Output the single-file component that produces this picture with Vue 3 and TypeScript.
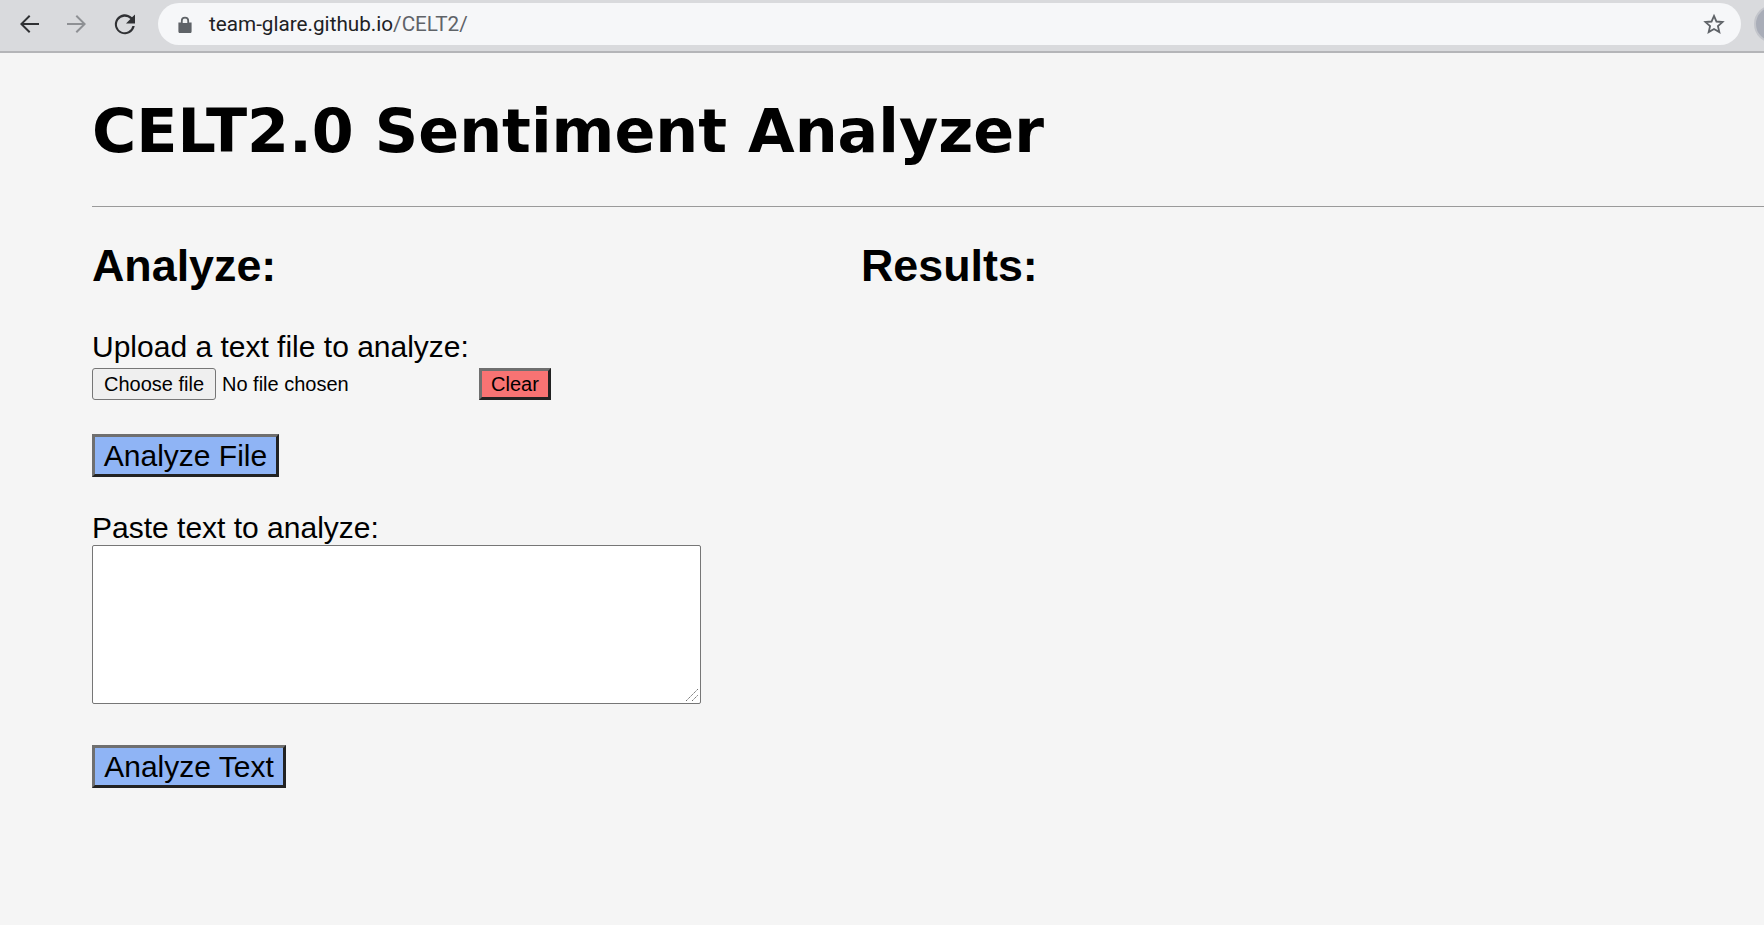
<template>
  <div class="page">
    <header class="toolbar">
      <button class="nav-btn" aria-label="Back">
        <svg width="24" height="24" viewBox="0 0 24 24"><path d="M22 11H6.800l6.600-6.600L12 3 3 12l9 9 1.400-1.400L6.800 13H22z" fill="#303134" /></svg>
      </button>
      <button class="nav-btn" aria-label="Forward">
        <svg width="24" height="24" viewBox="0 0 24 24"><path d="M2 11h15.200l-6.600-6.600L12 3l9 9-9 9-1.400-1.400 6.600-6.600H2z" fill="#8e9094" /></svg>
      </button>
      <button class="nav-btn" aria-label="Reload">
        <svg width="24" height="24" viewBox="0 0 24 24"><path d="M19 5.300A10 10 0 1 0 21.700 14h-2.300a7.800 7.800 0 1 1-2-6.900L13 11.500h9V2.500z" fill="#303134" /></svg>
      </button>
      <div class="omnibox">
        <svg class="lock" width="14" height="17" viewBox="0 0 14 17"><path d="M3.500 7V4.800a3.500 3.500 0 0 1 7 0V7M1 7h12v8.500a1 1 0 0 1-1 1H2a1 1 0 0 1-1-1z" fill="#5f6368" stroke="#5f6368" stroke-width="1.200" fill-rule="evenodd" /><path d="M4.700 7V4.800a2.300 2.300 0 0 1 4.600 0V7z" fill="#f1f3f4" /></svg>
        <span class="url">team-glare.github.io<span class="url-path">/CELT2/</span></span>
        <svg class="star" width="22" height="22" viewBox="0 0 24 24"><path d="M12 3.200l2.700 6.100 6.600.6-5 4.400 1.500 6.500-5.800-3.400-5.800 3.400 1.500-6.500-5-4.400 6.600-.6z" fill="none" stroke="#5f6368" stroke-width="2" stroke-linejoin="miter" /></svg>
      </div>
      <div class="avatar"></div>
    </header>

    <main class="content">
      <h1 class="title">CELT2.0 Sentiment Analyzer</h1>
      <hr class="rule" />
      <div class="columns">
        <section class="analyze">
          <h2 class="heading">Analyze:</h2>
          <p class="label upload-label">Upload a text file to analyze:</p>
          <div class="file-row">
            <button class="choose">Choose file</button>
            <span class="file-name">No file chosen</span>
            <button class="action clear">Clear</button>
          </div>
          <button class="action analyze-btn file-btn">Analyze File</button>
          <p class="label paste-label">Paste text to analyze:</p>
          <div class="paste-wrap">
            <textarea class="paste"></textarea>
            <svg class="grip" width="14" height="14" viewBox="0 0 14 14">
              <path d="M1 13L13 1M7 13l6-6" stroke="#6b6b6b" stroke-width="1" stroke-dasharray="1.500 .7" fill="none" />
            </svg>
          </div>
          <button class="action analyze-btn text-btn">Analyze Text</button>
        </section>
        <section class="results">
          <h2 class="heading">Results:</h2>
        </section>
      </div>
    </main>
  </div>
</template>

<script setup lang="ts">
</script>

<style>
html,
body {
  margin: 0;
  background: #f5f5f5;
  overflow: hidden;
}
</style>

<style scoped>
.page {
  height: 925px;
  background: #f5f5f5;
  font-family: 'Liberation Sans', Arial, sans-serif;
  color: #000;
}

.toolbar {
  height: 51px;
  display: flex;
  align-items: center;
  box-sizing: content-box;
  background: #d9dadd;
  border-bottom: 2px solid #b4b5b8;
  padding-left: 17px;
  overflow: hidden;
}

.nav-btn {
  width: 24px;
  height: 24px;
  margin-right: 24px;
  margin-top: -3px;
  padding: 0;
  border: none;
  background: none;
}

.omnibox {
  width: 1583px;
  height: 42px;
  margin-left: -3px;
  margin-top: -3px;
  flex: none;
  display: flex;
  align-items: center;
  border-radius: 21px;
  background: #f6f7f9;
  padding: 0 16px 0 20px;
  box-sizing: border-box;
}

.lock {
  margin-right: 17px;
}

.url {
  font-family: Roboto, 'Noto Sans', sans-serif;
  font-size: 20.7px;
  color: #202124;
  flex: 1;
}

.url-path {
  color: #5f6368;
}

.avatar {
  width: 34px;
  height: 34px;
  margin-left: 13px;
  margin-top: -3px;
  flex: none;
  border-radius: 50%;
  background: #a9adb8;
  border: 2px solid #c3c5cb;
}

.content {
  padding-left: 92px;
}

.title {
  margin: 0;
  padding-top: 42px;
  font-family: 'DejaVu Sans', Verdana, sans-serif;
  font-size: 60.3px;
  line-height: 72px;
  font-weight: 700;
}

.rule {
  margin: 39px 0 0;
  border: none;
  border-top: 1px solid #9a9a9a;
}

.columns {
  display: flex;
}

.analyze {
  width: 769px;
  display: flex;
  flex-direction: column;
  align-items: flex-start;
}

.heading {
  margin: 32px 0 0;
  font-size: 44.800px;
  line-height: 52px;
  font-weight: 700;
}

.label {
  margin: 0;
  font-size: 30px;
  line-height: 34px;
}

.upload-label {
  margin-top: 39px;
}

.file-row {
  display: flex;
  align-items: center;
  height: 32px;
  margin-top: 4px;
}

.choose {
  width: 124px;
  height: 32px;
  padding: 0;
  font-family: inherit;
  font-size: 20px;
  color: #000;
  background: #efefef;
  border: 1px solid #767676;
  border-radius: 3px;
}

.file-name {
  width: 263px;
  padding-left: 6px;
  font-size: 20px;
  box-sizing: border-box;
}

.action {
  padding: 0;
  font-family: inherit;
  color: #000;
  border: 3px solid;
  border-color: #6f6f6f #222 #222 #6f6f6f;
}

.clear {
  width: 72px;
  height: 32px;
  font-size: 20px;
  background: #f87373;
}

.analyze-btn {
  height: 43px;
  font-size: 30px;
  background: #8fb4f5;
}

.file-btn {
  width: 187px;
  margin-top: 34px;
}

.paste-label {
  margin-top: 34px;
}

.paste-wrap {
  position: relative;
  width: 609px;
  height: 159px;
}

.paste {
  display: block;
  width: 100%;
  height: 100%;
  padding: 2px;
  box-sizing: border-box;
  background: #fff;
  border: 1px solid #767676;
  border-radius: 2px;
  resize: none;
}

.grip {
  position: absolute;
  right: 2px;
  bottom: 2px;
}

.text-btn {
  width: 194px;
  margin-top: 41px;
}
</style>
